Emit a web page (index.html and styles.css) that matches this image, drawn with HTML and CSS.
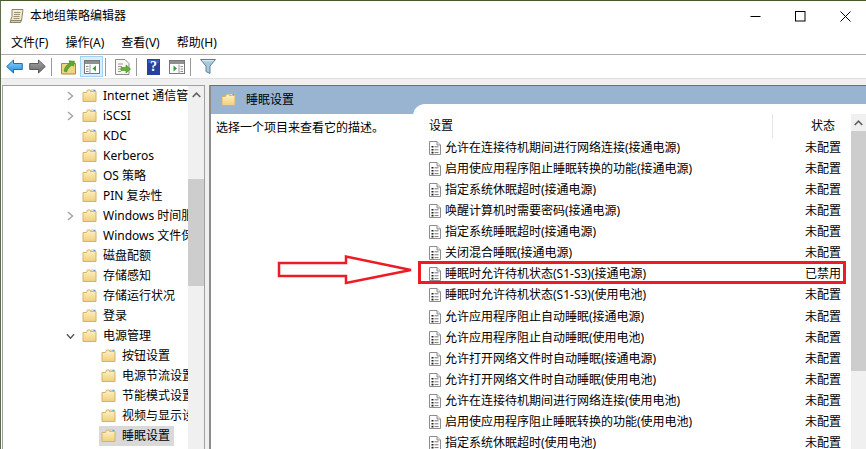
FILE: index.html
```html
<!DOCTYPE html>
<html lang="zh-CN">
<head>
<meta charset="utf-8">
<title>本地组策略编辑器</title>
<link rel="stylesheet" href="styles.css">
</head>
<body>
<svg class="defs" width="0" height="0">
  <defs>
    <linearGradient id="fold" x1="0" y1="0" x2="0" y2="1"><stop offset="0" stop-color="#fdf3c8"/><stop offset="1" stop-color="#f0cf7c"/></linearGradient>
    <linearGradient id="blue" x1="0" y1="0" x2="0" y2="1"><stop offset="0" stop-color="#8fd4fb"/><stop offset="1" stop-color="#1f8de0"/></linearGradient>
    <linearGradient id="grey" x1="0" y1="0" x2="0" y2="1"><stop offset="0" stop-color="#a8a8a8"/><stop offset="1" stop-color="#666"/></linearGradient>
    <symbol id="folder" viewBox="0 0 15 14">
      <path d="M1 3.5V12.5H14V2.500H9L8 1H5.500L4.500 3.500Z" fill="url(#fold)" stroke="#d3b368"/>
      <path d="M9 1H13.500V2.500H8.500Z" fill="#fff" stroke="#c9b27a" stroke-width=".8"/>
      <path d="M11.500 1.500h1.500" stroke="#5a9bd0"/>
    </symbol>
    <symbol id="doc" viewBox="0 0 12 14">
      <path d="M.5.5H8L11.500 4V13.500H.5Z" fill="#fff" stroke="#8d8d8d"/>
      <path d="M8 .5V4H11.500" fill="#e8e8e8" stroke="#8d8d8d"/>
      <path d="M2.500 5h2v1.600h-2zM2.500 8h2v1.600h-2zM2.500 10.800h2v1.600h-2z" fill="#222"/>
      <path d="M5.500 5.800h4M5.500 8.800h4M5.500 11.600h4" stroke="#777"/>
    </symbol>
  </defs>
</svg>
<div class="window">
  <header class="titlebar">
    <svg class="app-icon" width="16" height="16" viewBox="0 0 16 16"><path d="M3 1.500H14L12.500 12.500H1.500L3 8.500Z" fill="#f4ecd0" stroke="#8c8468"/><path d="M1 14.500H11.500L12.500 12.500H2Z" fill="#d9cfa8" stroke="#8c8468"/><path d="M5 4.500h6.500M5 6.500h6M4.500 8.500h6M4.500 10.500h6" stroke="#9a9276"/></svg>
    <span class="title-text">本地组策略编辑器</span>
    <span class="win-controls">
      <svg width="11" height="11" viewBox="0 0 11 11"><path d="M.5 5.500h10" stroke="#000"/></svg>
      <svg width="11" height="11" viewBox="0 0 11 11"><rect x=".5" y=".5" width="9.500" height="9.500" fill="none" stroke="#000"/></svg>
      <svg width="11" height="11" viewBox="0 0 11 11"><path d="M.5.5l10 10M10.500.5l-10 10" stroke="#000"/></svg>
    </span>
  </header>
  <nav class="menubar">
    <span>文件(F)</span><span>操作(A)</span><span>查看(V)</span><span>帮助(H)</span>
  </nav>
  <div class="toolbar">
    <span class="tool"><svg width="17" height="15" viewBox="0 0 17 15"><path d="M.7 7.500L7.500 1V4.500H16.300V10.500H7.500V14Z" fill="url(#blue)" stroke="#1b6fb5"/></svg></span>
    <span class="tool"><svg width="17" height="15" viewBox="0 0 17 15"><path d="M16.300 7.500L9.500 1V4.500H.7V10.500H9.500V14Z" fill="url(#grey)" stroke="#5c5c5c"/></svg></span>
    <i class="tool-sep"></i>
    <span class="tool"><svg width="15" height="16" viewBox="0 0 15 16"><path d="M.5 4.500H14.500V15H.5Z" fill="#f0d484" stroke="#a78a3e"/><path d="M3 12C4 7.500 6.500 5 9 4.500L8 1.800L13.500 2.300L12.500 7.300L11 6C8.800 7.300 6.500 10 5.500 13Z" fill="#5bae2f" stroke="#3a7f1c" stroke-width=".6"/></svg></span>
    <span class="tool active"><svg width="16" height="14" viewBox="0 0 16 14"><rect x=".5" y=".5" width="15" height="13" fill="#fff" stroke="#777"/><rect x="1" y="1" width="14" height="3" fill="#8f8f8f"/><path d="M6 4.500v9" stroke="#999"/><path d="M2 6.500h2.500M2 9h2.500M2 11.500h2.500" stroke="#888"/><path d="M12 5.500l-3.500 3L12 11.500Z" fill="#2aa33a"/></svg></span>
    <i class="tool-sep"></i>
    <span class="tool"><svg width="16" height="16" viewBox="0 0 16 16"><path d="M.5.5H10L14 4.500V15.500H.5Z" fill="#f8f7f0" stroke="#8d8d8d"/><path d="M3 5h5M3 7.500h4M3 10h3M3 12.500h3" stroke="#999"/><path d="M6 8.500h5V6l4.500 4-4.500 4V11.500H6Z" fill="#62b236" stroke="#3f8a20" stroke-width=".6"/></svg></span>
    <i class="tool-sep"></i>
    <span class="tool"><svg width="13" height="16" viewBox="0 0 13 16"><rect width="13" height="16" fill="#27409b"/><path d="M1 1h11v3H1z" fill="#3f5cc0"/></svg><b class="help-mark">?</b></span>
    <span class="tool"><svg width="16" height="14" viewBox="0 0 16 14"><rect x=".5" y=".5" width="15" height="13" fill="#fff" stroke="#777"/><rect x="1" y="1" width="14" height="3" fill="#8f8f8f"/><path d="M10 4.500v9" stroke="#999"/><path d="M11.500 6.500h2.500M11.500 9h2.500M11.500 11.500h2.500" stroke="#888"/><path d="M4.500 5.500l3.500 3L4.500 11.500Z" fill="#2aa33a"/></svg></span>
    <i class="tool-sep"></i>
    <span class="tool"><svg width="16" height="15" viewBox="0 0 16 15"><path d="M.5.5H15.500L10 7V14.500L6 12.500V7Z" fill="#a8c8dc" stroke="#5f7f96"/><path d="M2.500 1.800h11" stroke="#e9f3f9"/></svg></span>
  </div>
  <div class="band"></div>
  <main class="main">
    <section class="tree-pane">
      <div class="tree">
        <div class="node"><svg class="chev" height="10" viewBox="0 0 7 10"><path d="M1 1l4.500 4L1 9" fill="none" stroke="#a6a6a6" stroke-width="1.500"/></svg><svg class="folder"><use href="#folder"/></svg><span>Internet 通信管理</span></div>
        <div class="node"><svg class="chev" height="10" viewBox="0 0 7 10"><path d="M1 1l4.500 4L1 9" fill="none" stroke="#a6a6a6" stroke-width="1.500"/></svg><svg class="folder"><use href="#folder"/></svg><span>iSCSI</span></div>
        <div class="node"><i class="chev"></i><svg class="folder"><use href="#folder"/></svg><span>KDC</span></div>
        <div class="node"><i class="chev"></i><svg class="folder"><use href="#folder"/></svg><span>Kerberos</span></div>
        <div class="node"><i class="chev"></i><svg class="folder"><use href="#folder"/></svg><span>OS 策略</span></div>
        <div class="node"><i class="chev"></i><svg class="folder"><use href="#folder"/></svg><span>PIN 复杂性</span></div>
        <div class="node"><svg class="chev" height="10" viewBox="0 0 7 10"><path d="M1 1l4.500 4L1 9" fill="none" stroke="#a6a6a6" stroke-width="1.500"/></svg><svg class="folder"><use href="#folder"/></svg><span>Windows 时间服务</span></div>
        <div class="node"><i class="chev"></i><svg class="folder"><use href="#folder"/></svg><span>Windows 文件保护</span></div>
        <div class="node"><i class="chev"></i><svg class="folder"><use href="#folder"/></svg><span>磁盘配额</span></div>
        <div class="node"><i class="chev"></i><svg class="folder"><use href="#folder"/></svg><span>存储感知</span></div>
        <div class="node"><i class="chev"></i><svg class="folder"><use href="#folder"/></svg><span>存储运行状况</span></div>
        <div class="node"><i class="chev"></i><svg class="folder"><use href="#folder"/></svg><span>登录</span></div>
        <div class="node"><svg class="chev" height="7" viewBox="0 0 10 7"><path d="M1 1l4 4.500L9 1" fill="none" stroke="#555" stroke-width="1.500"/></svg><svg class="folder"><use href="#folder"/></svg><span>电源管理</span></div>
        <div class="node child"><svg class="folder"><use href="#folder"/></svg><span>按钮设置</span></div>
        <div class="node child"><svg class="folder"><use href="#folder"/></svg><span>电源节流设置</span></div>
        <div class="node child"><svg class="folder"><use href="#folder"/></svg><span>节能模式设置</span></div>
        <div class="node child"><svg class="folder"><use href="#folder"/></svg><span>视频与显示设置</span></div>
        <div class="node child selected"><svg class="folder"><use href="#folder"/></svg><span>睡眠设置</span></div>
      </div>
      <div class="scrollbar tree-scroll">
        <div class="sb-arrow"><svg width="9" height="6" viewBox="0 0 9 6"><path d="M.7 5L4.500 1.200 8.300 5" fill="none" stroke="#606060" stroke-width="1.600"/></svg></div>
        <div class="sb-gap"></div>
        <div class="sb-thumb"></div>
      </div>
    </section>
    <div class="splitter"></div>
    <section class="detail">
      <div class="detail-head">
        <svg class="folder"><use href="#folder"/></svg>
        <span>睡眠设置</span>
      </div>
      <div class="detail-body">
        <p class="description">选择一个项目来查看它的描述。</p>
        <div class="panel">
          <div class="list">
            <div class="list-head"><span class="col-name">设置</span><span class="col-state">状态</span></div>
            <div class="row"><svg class="doc"><use href="#doc"/></svg><span class="row-name">允许在连接待机期间进行网络连接(接通电源)</span><span class="row-state">未配置</span></div>
            <div class="row"><svg class="doc"><use href="#doc"/></svg><span class="row-name">启用使应用程序阻止睡眠转换的功能(接通电源)</span><span class="row-state">未配置</span></div>
            <div class="row"><svg class="doc"><use href="#doc"/></svg><span class="row-name">指定系统休眠超时(接通电源)</span><span class="row-state">未配置</span></div>
            <div class="row"><svg class="doc"><use href="#doc"/></svg><span class="row-name">唤醒计算机时需要密码(接通电源)</span><span class="row-state">未配置</span></div>
            <div class="row"><svg class="doc"><use href="#doc"/></svg><span class="row-name">指定系统睡眠超时(接通电源)</span><span class="row-state">未配置</span></div>
            <div class="row"><svg class="doc"><use href="#doc"/></svg><span class="row-name">关闭混合睡眠(接通电源)</span><span class="row-state">未配置</span></div>
            <div class="row"><svg class="doc"><use href="#doc"/></svg><span class="row-name">睡眠时允许待机状态(S1-S3)(接通电源)</span><span class="row-state">已禁用</span></div>
            <div class="row"><svg class="doc"><use href="#doc"/></svg><span class="row-name">睡眠时允许待机状态(S1-S3)(使用电池)</span><span class="row-state">未配置</span></div>
            <div class="row"><svg class="doc"><use href="#doc"/></svg><span class="row-name">允许应用程序阻止自动睡眠(接通电源)</span><span class="row-state">未配置</span></div>
            <div class="row"><svg class="doc"><use href="#doc"/></svg><span class="row-name">允许应用程序阻止自动睡眠(使用电池)</span><span class="row-state">未配置</span></div>
            <div class="row"><svg class="doc"><use href="#doc"/></svg><span class="row-name">允许打开网络文件时自动睡眠(接通电源)</span><span class="row-state">未配置</span></div>
            <div class="row"><svg class="doc"><use href="#doc"/></svg><span class="row-name">允许打开网络文件时自动睡眠(使用电池)</span><span class="row-state">未配置</span></div>
            <div class="row"><svg class="doc"><use href="#doc"/></svg><span class="row-name">允许在连接待机期间进行网络连接(使用电池)</span><span class="row-state">未配置</span></div>
            <div class="row"><svg class="doc"><use href="#doc"/></svg><span class="row-name">启用使应用程序阻止睡眠转换的功能(使用电池)</span><span class="row-state">未配置</span></div>
            <div class="row"><svg class="doc"><use href="#doc"/></svg><span class="row-name">指定系统休眠超时(使用电池)</span><span class="row-state">未配置</span></div>
          </div>
          <div class="scrollbar list-scroll">
            <div class="sb-arrow"><svg width="9" height="6" viewBox="0 0 9 6"><path d="M.7 5L4.500 1.200 8.300 5" fill="none" stroke="#606060" stroke-width="1.600"/></svg></div>
            <div class="sb-thumb"></div>
          </div>
        </div>
      </div>
    </section>
  </main>
</div>
<svg class="annotation" width="866" height="449" viewBox="0 0 866 449">
  <path d="M279 263H346V256.500L411 270L346 283V276H279Z" fill="#fff" stroke="#ed1c24" stroke-width="2.500"/>
  <rect x="419.500" y="262.500" width="425" height="20" fill="none" stroke="#ed1c24" stroke-width="3"/>
</svg>
</body>
</html>
```
FILE: styles.css
```css
* { box-sizing: border-box; }
html, body { margin: 0; height: 100%; overflow: hidden; background: #fff; }
body {
  position: relative;
  font: 12px/16px "Noto Sans", "Noto Sans CJK SC", sans-serif;
  color: #000;
}
.defs { position: absolute; }
.window {
  height: 449px;
  display: flex;
  flex-direction: column;
  border-top: 1px solid #44592c;
  border-left: 1px solid #5d6b4e;
}
.titlebar {
  height: 29px;
  flex: none;
  display: flex;
  align-items: center;
  padding: 1px 0 0 8px;
}
.app-icon { margin-right: 5px; }
.title-text { flex: 1; }
.win-controls {
  display: flex;
  align-items: center;
  gap: 34px;
  padding-right: 15px;
}
.win-controls svg { display: block; }
.menubar {
  height: 25px;
  flex: none;
  display: flex;
  align-items: center;
  gap: 17px;
  padding: 2px 0 0 10px;
  border-bottom: 1px solid #aeaeae;
}
.toolbar {
  height: 23px;
  flex: none;
  display: flex;
  align-items: center;
  padding-left: 2px;
}
.tool {
  width: 23px;
  height: 21px;
  display: flex;
  align-items: center;
  justify-content: center;
  position: relative;
}
.tool svg { display: block; }
.tool.active {
  background: #d9edfb;
  border: 1px solid #9fd2f5;
}
.tool-sep {
  width: 1px;
  height: 18px;
  background: #999;
  margin: 0 5px 0 2px;
}
.help-mark {
  position: absolute;
  inset: 0;
  text-align: center;
  color: #fff;
  font: bold 14px/21px "Liberation Serif", serif;
}
.band {
  height: 7px;
  flex: none;
  background: #f0f0f0;
  border-top: 1px solid #e0e0e0;
}
.main {
  flex: 1;
  min-height: 0;
  display: flex;
  overflow: hidden;
}
.tree-pane {
  width: 203px;
  flex: none;
  display: flex;
  margin-left: 1px;
  border-top: 1px solid #a0a0a0;
  border-left: 1px solid #a0a0a0;
  border-right: 1px solid #a0a0a0;
}
.tree {
  width: 185px;
  flex: none;
  overflow: hidden;
}
.node {
  height: 20px;
  display: flex;
  align-items: center;
  padding-left: 63px;
  white-space: nowrap;
  overflow: hidden;
}
.chev {
  width: 9px;
  flex: none;
  display: block;
  margin-right: 7px;
}
.folder {
  width: 15px;
  height: 14px;
  flex: none;
  margin-right: 6px;
}
.node.child {
  margin-left: 96px;
  padding-left: 2px;
  width: 89px;
}
.node.child.selected {
  width: 75px;
  background: #d9d9d9;
}
.scrollbar {
  flex: none;
  background: #f0f0f0;
  display: flex;
  flex-direction: column;
}
.tree-scroll { width: 16px; }
.sb-arrow {
  height: 17px;
  flex: none;
  display: flex;
  align-items: center;
  justify-content: center;
}
.sb-gap { height: 76px; flex: none; }
.sb-thumb { background: #cdcdcd; }
.tree-scroll .sb-thumb { height: 107px; }
.splitter {
  width: 4px;
  flex: none;
  background: #f0f0f0;
}
.detail {
  flex: 1;
  min-width: 0;
  display: flex;
  flex-direction: column;
  border-top: 1px solid #6e6e6e;
  border-left: 2px solid #8c8c8c;
}
.detail-head {
  height: 28px;
  flex: none;
  background: #99b4d1;
  display: flex;
  align-items: center;
  padding-left: 10px;
}
.detail-head .folder { margin-right: 10px; }
.detail-body {
  flex: 1;
  min-height: 0;
  display: flex;
  background: #fff;
}
.description {
  width: 202px;
  flex: none;
  margin: 0;
  padding: 6px 0 0 5px;
}
.panel {
  flex: 1;
  min-width: 0;
  display: flex;
  margin-top: -10px;
  background: #fff;
  border-top-left-radius: 12px;
}
.list {
  flex: 1;
  min-width: 0;
  padding-top: 10px;
  overflow: hidden;
}
.list-head {
  height: 24px;
  margin-bottom: -1px;
  display: flex;
  align-items: center;
}
.col-name {
  width: 360px;
  padding-left: 16px;
  height: 24px;
  line-height: 23px;
  border-right: 1px solid #e5e5e5;
}
.col-state { padding-left: 38px; }
.row {
  height: 21.14px;
  display: flex;
  align-items: center;
  padding-left: 16px;
  white-space: nowrap;
}
.doc {
  width: 12px;
  height: 14px;
  flex: none;
  margin-right: 4px;
}
.row-name { width: 360px; flex: none; }
.list-scroll { width: 15px; margin-top: 10px; }
.list-scroll .sb-thumb { height: 240px; }
.annotation {
  position: absolute;
  left: 0;
  top: 0;
  pointer-events: none;
}
```
